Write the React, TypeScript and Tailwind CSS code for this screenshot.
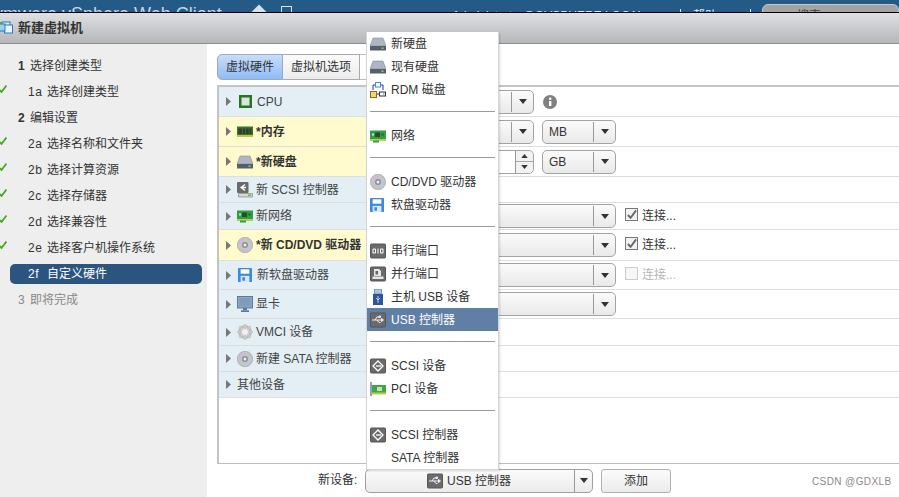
import React from "react";

const FONT = "font-['Liberation_Sans','Noto_Sans_CJK_SC',sans-serif]";

type IP = { className?: string };
const S = ({ className, children }: IP & { children: React.ReactNode }) => (
  <svg viewBox="0 0 16 16" className={className ?? "w-4 h-4 shrink-0"}>{children}</svg>
);

const Disk = () => (
  <S>
    <path d="M3 2h10L16 10H0z" fill="#aeb6c3" stroke="#858d9a" strokeWidth=".6" />
    <rect x="0" y="10" width="16" height="4.500" fill="#56606c" />
    <rect x="11.500" y="11.500" width="2" height="1.500" fill="#8fd14f" />
  </S>
);
const Ram = () => (
  <S>
    <rect x="0" y="2.500" width="16" height="10.500" fill="#2f7d2c" />
    <rect x="0" y="11" width="16" height="2" fill="#b9c64a" />
    <path d="M1.500 4.500H5V10H1.500zM5.800 4.500H8.200V10H5.800zM9 4.500h2.800V10H9zM12.500 4.500h2V10h-2z" fill="#3a3a32" />
  </S>
);
const Cpu = () => (
  <S className="w-[13px] h-[13px] shrink-0">
    <rect x="0" y="0" width="16" height="16" fill="#1d7a1d" />
    <rect x="3" y="3" width="10" height="10" fill="#dfe3de" stroke="#8a8f88" strokeWidth=".6" />
  </S>
);
const Scsi = () => (
  <S>
    <rect x="0" y="0" width="11.500" height="11" rx="1" fill="#6a6a6a" />
    <path d="M8 2.500 4 5.500l4 3M3.500 5.500H9" stroke="#fff" strokeWidth="1.300" fill="none" />
    <path d="M1.500 11.500h14v3.500h-14z" fill="#d6d8cf" stroke="#777" strokeWidth=".6" />
    <rect x="11" y="12.500" width="3" height="1.500" fill="#7ab648" />
  </S>
);
const Nic = () => (
  <S>
    <path d="M0 2.500h16v10H9v2H3v-2H0z" fill="#2f9e44" />
    <path d="M0 11h16v1.500H0z" fill="#c6cc45" />
    <rect x="5" y="4.500" width="5" height="4.500" fill="#2c4a2c" />
    <rect x="2" y="5.500" width="2" height="2" fill="#c9e8c0" />
    <rect x="11" y="5.500" width="3" height="2" fill="#356b35" />
  </S>
);
const Cd = () => (
  <S>
    <circle cx="8" cy="8" r="7.700" fill="#c5c5c8" stroke="#8e8e92" strokeWidth=".5" />
    <path d="M8 8 2 6a6.500 6.500 0 0 1 3-3.500z" fill="#d2b6e6" />
    <path d="M8 8l6 2a6.500 6.500 0 0 1-3 3.500z" fill="#b7c9ea" />
    <circle cx="8" cy="8" r="3" fill="#8e8e92" />
    <circle cx="8" cy="8" r="1.500" fill="#eee" />
  </S>
);
const Floppy = () => (
  <S className="w-[14px] h-[14px] shrink-0">
    <rect width="16" height="16" rx="1" fill="#3a8be0" />
    <rect x="3" y="1.500" width="10" height="5" fill="#ffffff" />
    <rect x="3" y="9" width="10" height="7" fill="#d8e8f7" />
    <rect x="5" y="10.500" width="3" height="4" fill="#3a8be0" />
  </S>
);
const Monitor = () => (
  <S>
    <rect x=".5" y=".5" width="15" height="11.500" fill="#90aac4" stroke="#5b7a99" />
    <rect x="2" y="2" width="12" height="8.500" fill="#7f9cb8" />
    <path d="M6 12h4v2H6zM4 14.300h8V16H4z" fill="#5b7a99" />
  </S>
);
const Gear = () => (
  <S>
    <circle cx="8" cy="8" r="5.500" fill="none" stroke="#bdbdbd" strokeWidth="3" />
    <path d="M8 0v16M0 8h16M2.300 2.300l11.400 11.400M13.700 2.300 2.300 13.700" stroke="#c8c8c8" strokeWidth="2.200" />
    <circle cx="8" cy="8" r="3" fill="#f0f0f0" />
  </S>
);
const Rdm = () => (
  <S>
    <rect x="5.500" y="0.500" width="5" height="4.500" fill="#fff" stroke="#3b8fd6" />
    <rect x=".5" y="9.500" width="6" height="6" fill="#f4d76a" stroke="#8a6d1f" />
    <rect x="9.500" y="10" width="6" height="4" fill="#fff" stroke="#333" />
    <rect x="13" y="11.300" width="1.500" height="1.300" fill="#6ab04a" />
    <path d="M5 3H3v5M11 3h2v5M7 12h2" stroke="#2a2ac0" fill="none" />
  </S>
);
const Gray = ({ children }: { children: React.ReactNode }) => (
  <S>
    <rect x=".5" y="1" width="15" height="14" rx="1" fill="#6b6b6b" stroke="#555" />
    {children}
  </S>
);
const Serial = () => (
  <Gray>
    <path d="M3 6h2.500v4H3zM10.500 6H13v4h-2.500z" fill="none" stroke="#fff" />
    <path d="M7.500 5.500h1v5h-1z" fill="#fff" />
  </Gray>
);
const Parallel = () => (
  <Gray>
    <path d="M4 3h5l2 2v5H4zM2.500 10.500h11v2.500h-11z" fill="#e6e6e6" />
    <path d="M5.500 5h2.500v3.500H5.500z" fill="#666" />
  </Gray>
);
const UsbGlyph = () => (
  <path d="M2 8h11M13.500 8l-2-1.500v3zM5 8l2-3h2M7 8l2 2.500h1.500M9 4h1.500v1.500H9z" stroke="#fff" fill="none" strokeWidth=".9" />
);
const UsbCtl = () => <Gray><UsbGlyph /></Gray>;
const UsbHost = () => (
  <S>
    <rect x="4.500" y="0" width="7" height="5" fill="#a9c6ea" stroke="#3a6ea8" strokeWidth=".6" />
    <path d="M3 5h10v11H3z" fill="#2f5597" />
    <path d="M8 7v7M6 9l2 2 2-2" stroke="#dfe8f5" strokeWidth=".8" fill="none" />
  </S>
);
const ScsiDev = () => (
  <Gray>
    <path d="M8 3 3 8l5 5 5-5z" fill="none" stroke="#fff" strokeWidth="1.300" />
    <path d="M6 8h5" stroke="#fff" strokeWidth="1.300" />
  </Gray>
);
const Pci = () => (
  <S>
    <path d="M1 1v14" stroke="#5b6f9a" strokeWidth="1.300" />
    <rect x="2" y="4" width="14" height="9" fill="#3fa64a" />
    <rect x="2" y="11.500" width="14" height="2" fill="#c6cc45" />
    <rect x="7" y="6" width="5" height="4" fill="#bfe3b5" />
  </S>
);
const Check = () => (
  <svg viewBox="0 0 7 8" className="w-[7px] h-[8px]"><path d="M0 5l1.500 2L6.500 .5" stroke="#43a81f" strokeWidth="1.800" fill="none" /></svg>
);
const Caret = ({ className }: IP) => (
  <svg viewBox="0 0 8 5" className={className ?? "w-[8px] h-[5px]"}><path d="M0 0h8L4 5z" fill="#333" /></svg>
);
const VmLogo = () => (
  <svg viewBox="0 0 14 14" className="w-[14px] h-[14px] shrink-0">
    <rect x="3" y="1" width="8" height="8" fill="#d5ebfa" stroke="#2a7ab8" />
    <rect x="5.500" y="4" width="8" height="8" fill="#eaf5fd" stroke="#2a7ab8" />
    <rect x="0" y="3" width="6" height="7" fill="#9ccbee" stroke="#2a7ab8" />
    <path d="M0 2h3" stroke="#4fae2c" strokeWidth="2" />
  </svg>
);

const Select = ({ w, caret = 22, label, className = "" }: { w: string; caret?: number; label?: string; className?: string }) => (
  <div className={`${w} ${className} h-[24px] shrink-0 flex border border-[#a3a3a3] rounded-[5px] bg-gradient-to-b from-[#fbfbfb] to-[#e9e9e9]`}>
    <div className="flex-1 flex items-center pl-[6px] text-[12px] text-[#333]">{label}</div>
    <div className="flex items-center justify-center border-l border-[#999] my-px" style={{ width: caret }}><Caret /></div>
  </div>
);

const Connect = ({ on = true }: { on?: boolean }) => (
  <div className={`flex items-center ml-[9px] text-[12px] ${on ? "text-[#333]" : "text-[#b5b5b5]"}`}>
    <div className={`w-[13px] h-[13px] -mt-[3px] border flex items-center justify-center mr-[4px] ${on ? "border-[#777] bg-[#f2f2f2]" : "border-[#ccc] bg-[#f6f6f6]"}`}>
      {on && (
        <svg viewBox="0 0 12 12" className="w-[12px] h-[12px]"><path d="M2 6l3 3 6-8" stroke="#666" strokeWidth="2" fill="none" /></svg>
      )}
    </div>
    连接...
  </div>
);

type Row = { h: string; icon?: React.ReactNode; iconBox?: string; text: string; y?: boolean; right?: React.ReactNode };

const rows: Row[] = [
  {
    h: "h-[30px]", icon: <Cpu />, iconBox: "w-[20px] pl-[2px]", text: "CPU",
    right: (
      <>
        <Select w="w-[166px]" />
        <svg viewBox="0 0 14 14" className="w-[14px] h-[14px] ml-[9px]">
          <circle cx="7" cy="7" r="7" fill="#808080" />
          <rect x="6" y="6" width="2.400" height="5" fill="#fff" />
          <circle cx="7.200" cy="3.800" r="1.300" fill="#fff" />
        </svg>
      </>
    ),
  },
  {
    h: "h-[30px]", icon: <Ram />, text: "*内存", y: true,
    right: (<><Select w="w-[166px]" /><Select w="w-[74px]" label="MB" className="ml-[8px]" /></>),
  },
  {
    h: "h-[30px]", icon: <Disk />, text: "*新硬盘", y: true,
    right: (
      <>
        <div className="w-[166px] h-[24px] shrink-0 flex justify-end border border-[#a3a3a3] rounded-[5px]">
          <div className="w-[18px] flex flex-col border-l border-[#999] bg-[#f2f2f2] rounded-r-[5px]">
            <div className="flex-1 flex items-center justify-center border-b border-[#aaa]"><Caret className="w-[7px] h-[4px] rotate-180" /></div>
            <div className="flex-1 flex items-center justify-center"><Caret className="w-[7px] h-[4px]" /></div>
          </div>
        </div>
        <Select w="w-[74px]" label="GB" className="ml-[8px]" />
      </>
    ),
  },
  { h: "h-[26px]", icon: <Scsi />, text: "新 SCSI 控制器" },
  {
    h: "h-[27px]", icon: <Nic />, text: "新网络",
    right: (<><Select w="w-[248px]" /><Connect /></>),
  },
  {
    h: "h-[31px]", icon: <Cd />, text: "*新 CD/DVD 驱动器", y: true,
    right: (<><Select w="w-[248px]" /><Connect /></>),
  },
  {
    h: "h-[29px]", icon: <Floppy />, iconBox: "w-[20px] pl-px", text: "新软盘驱动器",
    right: (<><Select w="w-[248px]" /><Connect on={false} /></>),
  },
  {
    h: "h-[29px]", icon: <Monitor />, text: "显卡",
    right: <Select w="w-[248px]" />,
  },
  { h: "h-[27px]", icon: <Gear />, text: "VMCI 设备" },
  { h: "h-[26px]", icon: <Cd />, text: "新建 SATA 控制器" },
  { h: "h-[26px]", text: "其他设备" },
];

const steps: { n: string; t: string; sub?: boolean; done?: boolean; sel?: boolean; dim?: boolean }[] = [
  { n: "1", t: "选择创建类型" },
  { n: "1a", t: "选择创建类型", sub: true, done: true },
  { n: "2", t: "编辑设置" },
  { n: "2a", t: "选择名称和文件夹", sub: true, done: true },
  { n: "2b", t: "选择计算资源", sub: true, done: true },
  { n: "2c", t: "选择存储器", sub: true, done: true },
  { n: "2d", t: "选择兼容性", sub: true, done: true },
  { n: "2e", t: "选择客户机操作系统", sub: true, done: true },
  { n: "2f", t: "自定义硬件", sub: true, sel: true },
  { n: "3", t: "即将完成", dim: true },
];

type M = { icon?: React.ReactNode; t?: string; hi?: boolean; sep?: boolean };
const menu: M[] = [
  { icon: <Disk />, t: "新硬盘" },
  { icon: <Disk />, t: "现有硬盘" },
  { icon: <Rdm />, t: "RDM 磁盘" },
  { sep: true },
  { icon: <Nic />, t: "网络" },
  { sep: true },
  { icon: <Cd />, t: "CD/DVD 驱动器" },
  { icon: <Floppy />, t: "软盘驱动器" },
  { sep: true },
  { icon: <Serial />, t: "串行端口" },
  { icon: <Parallel />, t: "并行端口" },
  { icon: <UsbHost />, t: "主机 USB 设备" },
  { icon: <UsbCtl />, t: "USB 控制器", hi: true },
  { sep: true },
  { icon: <ScsiDev />, t: "SCSI 设备" },
  { icon: <Pci />, t: "PCI 设备" },
  { sep: true },
  { icon: <ScsiDev />, t: "SCSI 控制器" },
  { t: "SATA 控制器" },
];

export default function App() {
  return (
    <div className={`${FONT} relative w-[899px] h-[497px] overflow-hidden bg-white text-[12px] text-[#333] flex flex-col`}>
      {/* app header, cut off by the dialog */}
      <div className="h-[12px] shrink-0 bg-[#235a86] overflow-hidden flex items-start text-[#dfe8f0]">
        <div className="w-[259px] shrink-0 -ml-[6px] pt-[2px] text-[18px] leading-[24px] whitespace-nowrap text-[#c8d6e2]">vmware vSphere Web Client</div>
        <div className="w-[28px] shrink-0 pt-[7px]">
          <div className="w-[12px] h-[12px] rotate-45 bg-[#d8e0e8]" />
        </div>
        <div className="w-[171px] shrink-0 pt-[6px]">
          <div className="w-[11px] h-[11px] border border-[#d8e0e8]" />
        </div>
        <div className="w-[228px] shrink-0 text-[12px] leading-[14px] pt-[9px] whitespace-nowrap">Administrator@GVSPHERE.LOCAL</div>
        <div className="w-px h-[12px] mt-[9px] shrink-0 bg-[#dfe8f0]" />
        <div className="w-[69px] shrink-0 text-[12px] leading-[14px] pl-[12px] pt-[9px]">帮助</div>
        <div className="w-px h-[12px] mt-[9px] shrink-0 bg-[#dfe8f0]" />
        <div className="w-[11px] shrink-0" />
        <div className="flex-1 mt-[4px] h-[20px] rounded-t-[6px] bg-[#a3a3a3] border border-[#c7c7c7] pl-[34px] pt-[3px] text-[#444] leading-[16px]">搜索</div>
      </div>
      <div className="h-px shrink-0 bg-black" />
      {/* dialog title */}
      <div className="h-[31px] shrink-0 flex items-center gap-[5px] border-b border-[#8e8e8e] bg-gradient-to-b from-[#dfe0e4] to-[#b6b7b9] font-bold text-[#333] text-[13px]">
        <div className="-ml-[1px]"><VmLogo /></div>
        新建虚拟机
      </div>

      <div className="flex-1 flex min-h-0">
        {/* wizard steps */}
        <div className="w-[207px] shrink-0 bg-[#eeeeee] pt-[9px] pl-[10px] pr-[5px]">
          {steps.map((s) => (
            <div key={s.n} className="relative h-[26px] flex items-center">
              {s.done && <div className="absolute -left-[10px] top-[6px]"><Check /></div>}
              <div className={`w-full h-[20px] flex items-center rounded-[5px] ${s.sel ? "bg-[#2b5480] text-white" : s.dim ? "text-[#888]" : ""} ${s.sub ? "pl-[18px]" : "pl-[8px]"}`}>
                <span className={`${s.sub ? "w-[19px]" : "w-[12px] font-bold"} ${s.dim ? "font-normal" : ""} shrink-0 tracking-[0.5px]`}>{s.n}</span>
                <span className="whitespace-nowrap">{s.t}</span>
              </div>
            </div>
          ))}
        </div>

        {/* main */}
        <div className="flex-1 min-w-0 flex flex-col pl-[10px] pt-[10px]">
          <div className="h-[26px] shrink-0 flex">
            <div className="w-[66px] flex items-center justify-center border border-[#9aa9bd] rounded-l-[5px] bg-gradient-to-b from-[#c7ddf9] to-[#8fbcf6]">虚拟硬件</div>
            <div className="w-[77px] flex items-center justify-center border-y border-r border-[#aaa] bg-gradient-to-b from-[#fbfbfb] to-[#ececec]">虚拟机选项</div>
            <div className="w-[60px] border-y border-[#bbb]" />
          </div>
          <div className="flex-1 mt-[5px] border-l-2 border-t-2 border-b border-t-[#c4c4c4] border-l-[#c4c4c4] border-b-[#bdbdbd] min-h-0">
            {rows.map((r) => (
              <div key={r.text} className={`${r.h} flex border-b border-[#dedede]`}>
                <div className={`w-[148px] shrink-0 flex items-center pl-[7px] ${r.y ? "bg-[#fffbcf] font-bold text-[#333]" : "bg-[#e3eef5] text-[#444]"}`}>
                  <svg viewBox="0 0 5 9" className="w-[5px] h-[9px] shrink-0 mr-[6px]"><path d="M0 0l5 4.500L0 9z" fill="#777" /></svg>
                  {r.icon && <div className={`${r.iconBox ?? "w-[19px]"} shrink-0`}>{r.icon}</div>}
                  <span className="whitespace-nowrap">{r.text}</span>
                </div>
                {r.right && <div className="flex items-center pl-[1px]">{r.right}</div>}
              </div>
            ))}
          </div>
          {/* footer */}
          <div className="h-[33px] shrink-0 flex items-center">
            <span className="ml-[101px] w-[47px] text-[#333] -mt-[2px]">新设备:</span>
            <div className="w-[228px] h-[24px] flex border border-[#a0a0a0] rounded-[5px] bg-gradient-to-b from-[#fbfbfb] to-[#ebebeb]">
              <div className="flex-1 flex items-center justify-center gap-[4px] pr-[2px]"><UsbCtl /><span>USB 控制器</span></div>
              <div className="w-[18px] flex items-center justify-center border-l border-[#999]"><Caret /></div>
            </div>
            <div className="ml-[8px] w-[70px] h-[24px] flex items-center justify-center border border-[#b0b0b0] rounded-[3px] bg-gradient-to-b from-[#fbfbfb] to-[#ebebeb]">添加</div>
            <span className="ml-[141px] mt-[2px] text-[10px] tracking-[0.4px] text-[#8a8a8a] whitespace-nowrap">CSDN @GDXLB</span>
          </div>
        </div>
      </div>

      {/* open dropdown menu */}
      <div className="absolute left-[366px] top-[32px] w-[133px] bg-white border-x border-b border-[#d5d5d5] shadow-[1px_1px_2px_rgba(0,0,0,0.15)]">
        {menu.map((m, i) =>
          m.sep ? (
            <div key={i} className="h-[23px] pt-[10px] px-[3px]"><div className="h-px bg-[#9a9a9a]" /></div>
          ) : (
            <div key={i} className={`h-[23px] flex items-center pl-[3px] ${m.hi ? "bg-[#5f7fa5] text-white" : ""}`}>
              <div className="w-[21px] shrink-0">{m.icon}</div>
              <span className="whitespace-nowrap">{m.t}</span>
            </div>
          )
        )}
      </div>
    </div>
  );
}
